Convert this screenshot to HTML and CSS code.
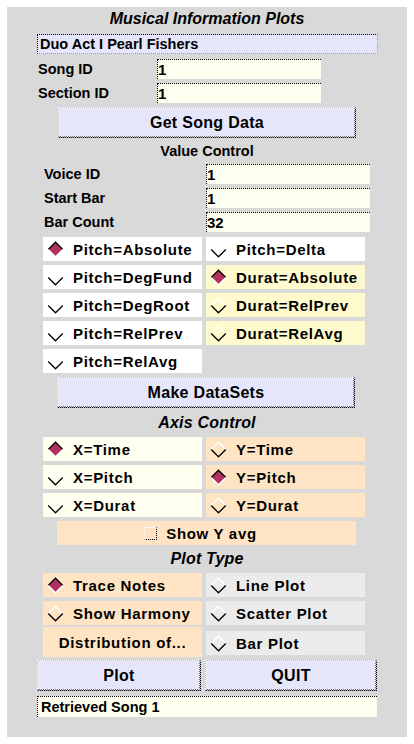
FILE: index.html
```html
<!DOCTYPE html>
<html>
<head>
<meta charset="utf-8">
<link rel="stylesheet" href="styles.css">
</head>
<body>
<div class="panel">
  <div class="title">Musical Information Plots</div>
  <div class="songname">Duo Act I Pearl Fishers</div>

  <div class="lrow first"><span class="lbl">Song ID</span><span class="entry">1</span></div>
  <div class="lrow"><span class="lbl">Section ID</span><span class="entry">1</span></div>

  <div class="btn getsong"><span class="btn-in">Get Song Data</span></div>

  <div class="head bold">Value Control</div>
  <div class="vrow first"><span class="lbl">Voice ID</span><span class="entry">1</span></div>
  <div class="vrow"><span class="lbl">Start Bar</span><span class="entry">1</span></div>
  <div class="vrow"><span class="lbl">Bar Count</span><span class="entry">32</span></div>

  <div class="grid pitchgrid">
    <div class="radio white sel"><svg class="dia" width="17" height="17" viewBox="0 0 17 17"><polygon points="8.5,1.2 15.8,8.5 8.5,15.8 1.2,8.5" fill="#b03060"/><polyline points="1.2,8.5 8.5,1.2 15.8,8.5" fill="none" stroke="#000" stroke-width="1.3"/><polyline points="1.2,8.5 8.5,15.8 15.8,8.5" fill="none" stroke="#fff" stroke-width="1.3"/></svg><span>Pitch=Absolute</span></div>
    <div class="radio white"><svg class="dia" width="17" height="17" viewBox="0 0 17 17"><polyline points="1.2,8.5 8.5,1.2 15.8,8.5" fill="none" stroke="#fff" stroke-width="1.3"/><polyline points="1.2,8.5 8.5,15.8 15.8,8.5" fill="none" stroke="#000" stroke-width="1.3"/></svg><span>Pitch=Delta</span></div>
    <div class="radio white"><svg class="dia" width="17" height="17" viewBox="0 0 17 17"><polyline points="1.2,8.5 8.5,1.2 15.8,8.5" fill="none" stroke="#fff" stroke-width="1.3"/><polyline points="1.2,8.5 8.5,15.8 15.8,8.5" fill="none" stroke="#000" stroke-width="1.3"/></svg><span>Pitch=DegFund</span></div>
    <div class="radio lemon sel"><svg class="dia" width="17" height="17" viewBox="0 0 17 17"><polygon points="8.5,1.2 15.8,8.5 8.5,15.8 1.2,8.5" fill="#b03060"/><polyline points="1.2,8.5 8.5,1.2 15.8,8.5" fill="none" stroke="#000" stroke-width="1.3"/><polyline points="1.2,8.5 8.5,15.8 15.8,8.5" fill="none" stroke="#fff" stroke-width="1.3"/></svg><span>Durat=Absolute</span></div>
    <div class="radio white"><svg class="dia" width="17" height="17" viewBox="0 0 17 17"><polyline points="1.2,8.5 8.5,1.2 15.8,8.5" fill="none" stroke="#fff" stroke-width="1.3"/><polyline points="1.2,8.5 8.5,15.8 15.8,8.5" fill="none" stroke="#000" stroke-width="1.3"/></svg><span>Pitch=DegRoot</span></div>
    <div class="radio lemon"><svg class="dia" width="17" height="17" viewBox="0 0 17 17"><polyline points="1.2,8.5 8.5,1.2 15.8,8.5" fill="none" stroke="#fff" stroke-width="1.3"/><polyline points="1.2,8.5 8.5,15.8 15.8,8.5" fill="none" stroke="#000" stroke-width="1.3"/></svg><span>Durat=RelPrev</span></div>
    <div class="radio white"><svg class="dia" width="17" height="17" viewBox="0 0 17 17"><polyline points="1.2,8.5 8.5,1.2 15.8,8.5" fill="none" stroke="#fff" stroke-width="1.3"/><polyline points="1.2,8.5 8.5,15.8 15.8,8.5" fill="none" stroke="#000" stroke-width="1.3"/></svg><span>Pitch=RelPrev</span></div>
    <div class="radio lemon"><svg class="dia" width="17" height="17" viewBox="0 0 17 17"><polyline points="1.2,8.5 8.5,1.2 15.8,8.5" fill="none" stroke="#fff" stroke-width="1.3"/><polyline points="1.2,8.5 8.5,15.8 15.8,8.5" fill="none" stroke="#000" stroke-width="1.3"/></svg><span>Durat=RelAvg</span></div>
    <div class="radio white"><svg class="dia" width="17" height="17" viewBox="0 0 17 17"><polyline points="1.2,8.5 8.5,1.2 15.8,8.5" fill="none" stroke="#fff" stroke-width="1.3"/><polyline points="1.2,8.5 8.5,15.8 15.8,8.5" fill="none" stroke="#000" stroke-width="1.3"/></svg><span>Pitch=RelAvg</span></div>
  </div>

  <div class="btn makeds"><span class="btn-in">Make DataSets</span></div>

  <div class="head ital axis">Axis Control</div>
  <div class="grid axisgrid">
    <div class="radio ivory sel"><svg class="dia" width="17" height="17" viewBox="0 0 17 17"><polygon points="8.5,1.2 15.8,8.5 8.5,15.8 1.2,8.5" fill="#b03060"/><polyline points="1.2,8.5 8.5,1.2 15.8,8.5" fill="none" stroke="#000" stroke-width="1.3"/><polyline points="1.2,8.5 8.5,15.8 15.8,8.5" fill="none" stroke="#fff" stroke-width="1.3"/></svg><span>X=Time</span></div>
    <div class="radio bisque"><svg class="dia" width="17" height="17" viewBox="0 0 17 17"><polyline points="1.2,8.5 8.5,1.2 15.8,8.5" fill="none" stroke="#fff" stroke-width="1.3"/><polyline points="1.2,8.5 8.5,15.8 15.8,8.5" fill="none" stroke="#000" stroke-width="1.3"/></svg><span>Y=Time</span></div>
    <div class="radio ivory"><svg class="dia" width="17" height="17" viewBox="0 0 17 17"><polyline points="1.2,8.5 8.5,1.2 15.8,8.5" fill="none" stroke="#fff" stroke-width="1.3"/><polyline points="1.2,8.5 8.5,15.8 15.8,8.5" fill="none" stroke="#000" stroke-width="1.3"/></svg><span>X=Pitch</span></div>
    <div class="radio bisque sel"><svg class="dia" width="17" height="17" viewBox="0 0 17 17"><polygon points="8.5,1.2 15.8,8.5 8.5,15.8 1.2,8.5" fill="#b03060"/><polyline points="1.2,8.5 8.5,1.2 15.8,8.5" fill="none" stroke="#000" stroke-width="1.3"/><polyline points="1.2,8.5 8.5,15.8 15.8,8.5" fill="none" stroke="#fff" stroke-width="1.3"/></svg><span>Y=Pitch</span></div>
    <div class="radio ivory"><svg class="dia" width="17" height="17" viewBox="0 0 17 17"><polyline points="1.2,8.5 8.5,1.2 15.8,8.5" fill="none" stroke="#fff" stroke-width="1.3"/><polyline points="1.2,8.5 8.5,15.8 15.8,8.5" fill="none" stroke="#000" stroke-width="1.3"/></svg><span>X=Durat</span></div>
    <div class="radio bisque"><svg class="dia" width="17" height="17" viewBox="0 0 17 17"><polyline points="1.2,8.5 8.5,1.2 15.8,8.5" fill="none" stroke="#fff" stroke-width="1.3"/><polyline points="1.2,8.5 8.5,15.8 15.8,8.5" fill="none" stroke="#000" stroke-width="1.3"/></svg><span>Y=Durat</span></div>
  </div>

  <div class="showavg"><span class="check"></span><span>Show Y avg</span></div>

  <div class="head ital plottype">Plot Type</div>
  <div class="grid plotgrid">
    <div class="radio bisque sel"><svg class="dia" width="17" height="17" viewBox="0 0 17 17"><polygon points="8.5,1.2 15.8,8.5 8.5,15.8 1.2,8.5" fill="#b03060"/><polyline points="1.2,8.5 8.5,1.2 15.8,8.5" fill="none" stroke="#000" stroke-width="1.3"/><polyline points="1.2,8.5 8.5,15.8 15.8,8.5" fill="none" stroke="#fff" stroke-width="1.3"/></svg><span>Trace Notes</span></div>
    <div class="radio grey"><svg class="dia" width="17" height="17" viewBox="0 0 17 17"><polyline points="1.2,8.5 8.5,1.2 15.8,8.5" fill="none" stroke="#fff" stroke-width="1.3"/><polyline points="1.2,8.5 8.5,15.8 15.8,8.5" fill="none" stroke="#000" stroke-width="1.3"/></svg><span>Line Plot</span></div>
    <div class="radio bisque"><svg class="dia" width="17" height="17" viewBox="0 0 17 17"><polyline points="1.2,8.5 8.5,1.2 15.8,8.5" fill="none" stroke="#fff" stroke-width="1.3"/><polyline points="1.2,8.5 8.5,15.8 15.8,8.5" fill="none" stroke="#000" stroke-width="1.3"/></svg><span>Show Harmony</span></div>
    <div class="radio grey"><svg class="dia" width="17" height="17" viewBox="0 0 17 17"><polyline points="1.2,8.5 8.5,1.2 15.8,8.5" fill="none" stroke="#fff" stroke-width="1.3"/><polyline points="1.2,8.5 8.5,15.8 15.8,8.5" fill="none" stroke="#000" stroke-width="1.3"/></svg><span>Scatter Plot</span></div>
    <div class="menubtn bisque">Distribution of...</div>
    <div class="radio grey mid"><svg class="dia" width="17" height="17" viewBox="0 0 17 17"><polyline points="1.2,8.5 8.5,1.2 15.8,8.5" fill="none" stroke="#fff" stroke-width="1.3"/><polyline points="1.2,8.5 8.5,15.8 15.8,8.5" fill="none" stroke="#000" stroke-width="1.3"/></svg><span>Bar Plot</span></div>
  </div>

  <div class="btnrow">
    <div class="btn plot"><span class="btn-in">Plot</span></div>
    <div class="btn quit"><span class="btn-in">QUIT</span></div>
  </div>

  <div class="status">Retrieved Song 1</div>
</div>
</body>
</html>
```

FILE: styles.css
```css
html, body {
  margin: 0;
  padding: 0;
  background: #ffffff;
}

.panel {
  margin: 7px;
  width: 400px;
  height: 730px;
  background: #d9d9d9;
  display: flex;
  flex-direction: column;
  align-items: flex-start;
  font-family: "Liberation Sans", Arial, sans-serif;
  color: #000;
}

.title {
  align-self: stretch;
  height: 23px;
  line-height: 24px;
  text-align: center;
  font-style: italic;
  font-weight: bold;
  font-size: 16px;
}

.songname {
  margin: 4px 0 0 30px;
  width: 341px;
  height: 20px;
  box-sizing: border-box;
  background: #e6e6fa;
  border-top: 1px dotted #000;
  border-left: 1px dotted #000;
  border-right: 1px dotted #9a9a9a;
  border-bottom: 1px dotted #9a9a9a;
  padding-left: 2px;
  font-size: 14.5px;
  font-weight: bold;
  line-height: 19px;
}

.lrow, .vrow {
  display: flex;
  align-items: center;
  height: 20px;
  margin-top: 4px;
}
.lrow.first { margin-top: 5px; }
.vrow.first { margin-top: 0; }
.lrow .lbl {
  margin-left: 31px;
  width: 119px;
}
.vrow .lbl {
  margin-left: 37px;
  width: 162px;
}
.lbl {
  font-size: 14.5px;
  font-weight: bold;
}

.entry {
  width: 164px;
  height: 20px;
  box-sizing: border-box;
  background: #fffff0;
  border-top: 1px dotted #000;
  border-left: 1px dotted #000;
  font-size: 15px;
  font-weight: bold;
  line-height: 19px;
  padding-left: 0;
}

.btn {
  height: 31px;
  box-sizing: border-box;
  border: 1px dotted;
  border-color: #ffffff #000 #000 #ffffff;
  background: #b8b8c8;
  display: flex;
}
.btn-in {
  flex: 1;
  display: flex;
  align-items: center;
  justify-content: center;
  background: #e6e6fa;
  border: 1px dotted;
  border-color: #f0f0f0 #707070 #707070 #f0f0f0;
  font-size: 16px;
  font-weight: bold;
  letter-spacing: 0.3px;
}

.getsong {
  margin: 4px 0 0 51px;
  width: 298px;
}

.head {
  align-self: stretch;
  text-align: center;
}
.head.bold {
  height: 26px;
  line-height: 26px;
  font-size: 14.5px;
  font-weight: bold;
}
.head.ital {
  font-style: italic;
  font-weight: bold;
  font-size: 16px;
  letter-spacing: 0.2px;
}
.axis { height: 29px; line-height: 29px; }
.plottype { height: 28px; line-height: 27px; }

.grid {
  display: grid;
  grid-template-columns: 159px 159px;
  column-gap: 4px;
  row-gap: 4px;
  margin-left: 36px;
  grid-auto-rows: 24px;
}
.pitchgrid { margin-top: 5px; }

.radio {
  display: flex;
  align-items: center;
  height: 24px;
  font-size: 15px;
  font-weight: bold;
  letter-spacing: 0.7px;
}
.radio .dia {
  margin-left: 4px;
  margin-right: 9px;
  flex: none;
}

.white { background: #ffffff; }
.lemon { background: #fffacd; }
.ivory { background: #fffff0; }
.bisque { background: #ffe4c4; }
.grey { background: #ebebeb; }

.makeds {
  margin: 4px 0 0 50px;
  width: 298px;
}

.showavg {
  margin: 4px 0 0 50px;
  width: 299px;
  height: 24px;
  background: #ffe4c4;
  display: flex;
  align-items: center;
  justify-content: center;
  gap: 9px;
  font-size: 15px;
  font-weight: bold;
  letter-spacing: 0.7px;
}
.check {
  width: 13px;
  height: 13px;
  box-sizing: border-box;
  border: 1px dotted;
  border-color: #ffffff #000 #000 #ffffff;
  margin-left: -12px;
}

.plotgrid {
  grid-template-rows: 24px 24px 28px;
}
.menubtn {
  height: 30px;
  margin-top: -2px;
  display: flex;
  align-items: center;
  justify-content: center;
  font-size: 15px;
  font-weight: bold;
  letter-spacing: 0.7px;
}
.radio.mid { align-self: center; }

.btnrow {
  display: flex;
  gap: 4px;
  margin: 3px 0 0 30px;
}
.plot { width: 164px; }
.quit { width: 172px; }

.status {
  margin: 5px 0 0 30px;
  width: 340px;
  height: 21px;
  box-sizing: border-box;
  background: #fffff0;
  border-top: 1px dotted #000;
  border-left: 1px dotted #000;
  padding-left: 3px;
  font-size: 14.5px;
  font-weight: bold;
  line-height: 20px;
}
```
